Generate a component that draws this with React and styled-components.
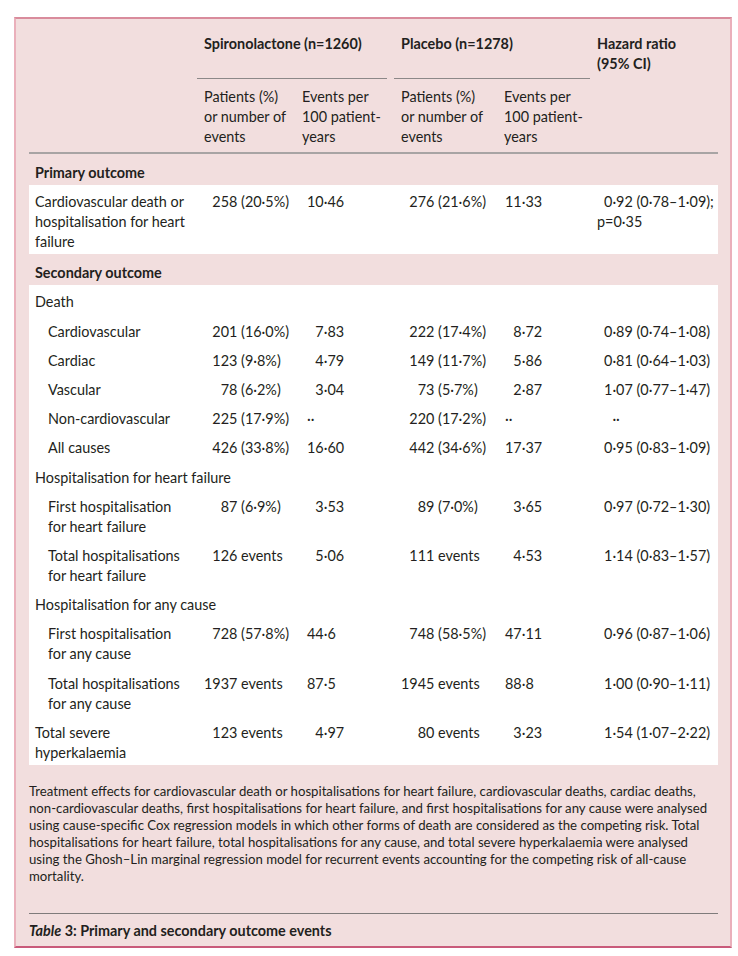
import React from "react";
import styled, { createGlobalStyle } from "styled-components";

const GlobalStyle = createGlobalStyle`
  body {
    margin: 0;
    background: #ffffff;
    font-family: Lato, "Open Sans", sans-serif;
    color: #231f20;
  }
`;

const Figure = styled.figure`
  box-sizing: border-box;
  width: 718px;
  margin: 17px 0 0 14px;
  padding: 0 11px 0 13px;
  background: #f2dede;
  border-style: solid;
  border-width: 2px;
  border-color: #d98c9c #eab0bb #c95a7a #eab0bb;
`;

const Table = styled.table`
  width: 689px;
  border-collapse: collapse;
  table-layout: fixed;
  font-size: 14.4px;
  line-height: 20px;
`;

const Head = styled.thead`
  border-bottom: 2px solid #a8a4a4;
`;

const GroupCell = styled.th`
  padding: 15px ${({ $gap }) => ($gap ? "7px" : "0")} 0 0;
  text-align: left;
  vertical-align: top;
  font-weight: 700;
`;

const GroupTitle = styled.div`
  padding: 0 0 24px 7px;
  border-bottom: 1px solid #8c8888;
`;

const HeadCell = styled.th`
  padding: ${({ $top }) => ($top ? "15px 7px 0" : "8px 7px 5px")};
  text-align: left;
  vertical-align: top;
  font-weight: ${({ $top }) => ($top ? 700 : 400)};
`;

const SectionCell = styled.td`
  padding: 8.5px 6px 2.5px;
  font-weight: 700;
`;

const Cell = styled.td`
  background: #ffffff;
  padding: 7.3px 7px 1.9px ${({ $left }) => $left || 7}px;
  vertical-align: top;
  white-space: nowrap;
`;

const RatioCell = styled(Cell)`
  text-indent: 7px;
`;

const Footnote = styled.p`
  margin: 18.5px 0 0;
  width: 720px;
  font-size: 13.2px;
  line-height: 17px;
`;

const Caption = styled.figcaption`
  margin-top: 28px;
  width: 689px;
  border-top: 1px solid #7f7b7b;
  padding: 7px 0 5px;
  font-size: 14.4px;
  line-height: 20px;
  font-weight: 700;
`;

const FIG = "\u2007";

const pad = (v, width) => {
  const m = v.match(/^\d+/);
  if (!m) return v;
  return FIG.repeat(Math.max(0, width - m[0].length)) + v;
};

const rows = [
  { section: "Primary outcome" },
  {
    label: ["Cardiovascular death or", "hospitalisation for heart", "failure"],
    s: "258 (20·5%)", se: "10·46", p: "276 (21·6%)", pe: "11·33",
    hr: ["0·92 (0·78–1·09);", "p=0·35"],
  },
  { section: "Secondary outcome" },
  { label: ["Death"] },
  { label: ["Cardiovascular"], sub: true, s: "201 (16·0%)", se: "7·83", p: "222 (17·4%)", pe: "8·72", hr: ["0·89 (0·74–1·08)"] },
  { label: ["Cardiac"], sub: true, s: "123 (9·8%)", se: "4·79", p: "149 (11·7%)", pe: "5·86", hr: ["0·81 (0·64–1·03)"] },
  { label: ["Vascular"], sub: true, s: "78 (6·2%)", se: "3·04", p: "73 (5·7%)", pe: "2·87", hr: ["1·07 (0·77–1·47)"] },
  { label: ["Non-cardiovascular"], sub: true, s: "225 (17·9%)", se: "··", p: "220 (17·2%)", pe: "··", hr: ["\u2007··"] },
  { label: ["All causes"], sub: true, s: "426 (33·8%)", se: "16·60", p: "442 (34·6%)", pe: "17·37", hr: ["0·95 (0·83–1·09)"] },
  { label: ["Hospitalisation for heart failure"] },
  { label: ["First hospitalisation", "for heart failure"], sub: true, s: "87 (6·9%)", se: "3·53", p: "89 (7·0%)", pe: "3·65", hr: ["0·97 (0·72–1·30)"] },
  { label: ["Total hospitalisations", "for heart failure"], sub: true, s: "126 events", se: "5·06", p: "111 events", pe: "4·53", hr: ["1·14 (0·83–1·57)"] },
  { label: ["Hospitalisation for any cause"] },
  { label: ["First hospitalisation", "for any cause"], sub: true, s: "728 (57·8%)", se: "44·6", p: "748 (58·5%)", pe: "47·11", hr: ["0·96 (0·87–1·06)"] },
  { label: ["Total hospitalisations", "for any cause"], sub: true, s: "1937 events", se: "87·5", p: "1945 events", pe: "88·8", hr: ["1·00 (0·90–1·11)"] },
  { label: ["Total severe", "hyperkalaemia"], s: "123 events", se: "4·97", p: "80 events", pe: "3·23", hr: ["1·54 (1·07–2·22)"] },
];

const footnote = [
  "Treatment effects for cardiovascular death or hospitalisations for heart failure, cardiovascular deaths, cardiac deaths,",
  "non-cardiovascular deaths, first hospitalisations for heart failure, and first hospitalisations for any cause were analysed",
  "using cause-specific Cox regression models in which other forms of death are considered as the competing risk. Total",
  "hospitalisations for heart failure, total hospitalisations for any cause, and total severe hyperkalaemia were analysed",
  "using the Ghosh–Lin marginal regression model for recurrent events accounting for the competing risk of all-cause",
  "mortality.",
];

const Lines = ({ items }) =>
  items.map((t, i) => (
    <React.Fragment key={i}>
      {i > 0 && <br />}
      {t}
    </React.Fragment>
  ));

const DataRow = ({ row }) => (
  <tr>
    <Cell $left={row.sub ? 19 : 6}>
      <Lines items={row.label} />
    </Cell>
    <Cell>{row.s ? pad(row.s, 4) : ""}</Cell>
    <Cell $left={12}>{row.se ? pad(row.se, 2) : ""}</Cell>
    <Cell>{row.p ? pad(row.p, 4) : ""}</Cell>
    <Cell $left={8}>{row.pe ? pad(row.pe, 2) : ""}</Cell>
    <RatioCell>{row.hr ? <Lines items={row.hr} /> : ""}</RatioCell>
  </tr>
);

export default function App() {
  return (
    <>
      <GlobalStyle />
      <Figure>
        <Table>
          <colgroup>
            <col style={{ width: 168 }} />
            <col style={{ width: 98 }} />
            <col style={{ width: 99 }} />
            <col style={{ width: 103 }} />
            <col style={{ width: 93 }} />
            <col style={{ width: 128 }} />
          </colgroup>
          <Head>
            <tr>
              <HeadCell $top rowSpan={2} />
              <GroupCell colSpan={2} $gap>
                <GroupTitle>Spironolactone (n=1260)</GroupTitle>
              </GroupCell>
              <GroupCell colSpan={2}>
                <GroupTitle>Placebo (n=1278)</GroupTitle>
              </GroupCell>
              <HeadCell $top rowSpan={2}>
                Hazard ratio
                <br />
                (95% CI)
              </HeadCell>
            </tr>
            <tr>
              <HeadCell>Patients (%) or number of events</HeadCell>
              <HeadCell>Events per 100 patient-years</HeadCell>
              <HeadCell>Patients (%) or number of events</HeadCell>
              <HeadCell>Events per 100 patient-years</HeadCell>
            </tr>
          </Head>
          <tbody>
            {rows.map((row, i) =>
              row.section ? (
                <tr key={i}>
                  <SectionCell colSpan={6}>{row.section}</SectionCell>
                </tr>
              ) : (
                <DataRow key={i} row={row} />
              )
            )}
          </tbody>
        </Table>
        <Footnote>
          <Lines items={footnote} />
        </Footnote>
        <Caption>
          <em>Table</em> 3: Primary and secondary outcome events
        </Caption>
      </Figure>
    </>
  );
}
